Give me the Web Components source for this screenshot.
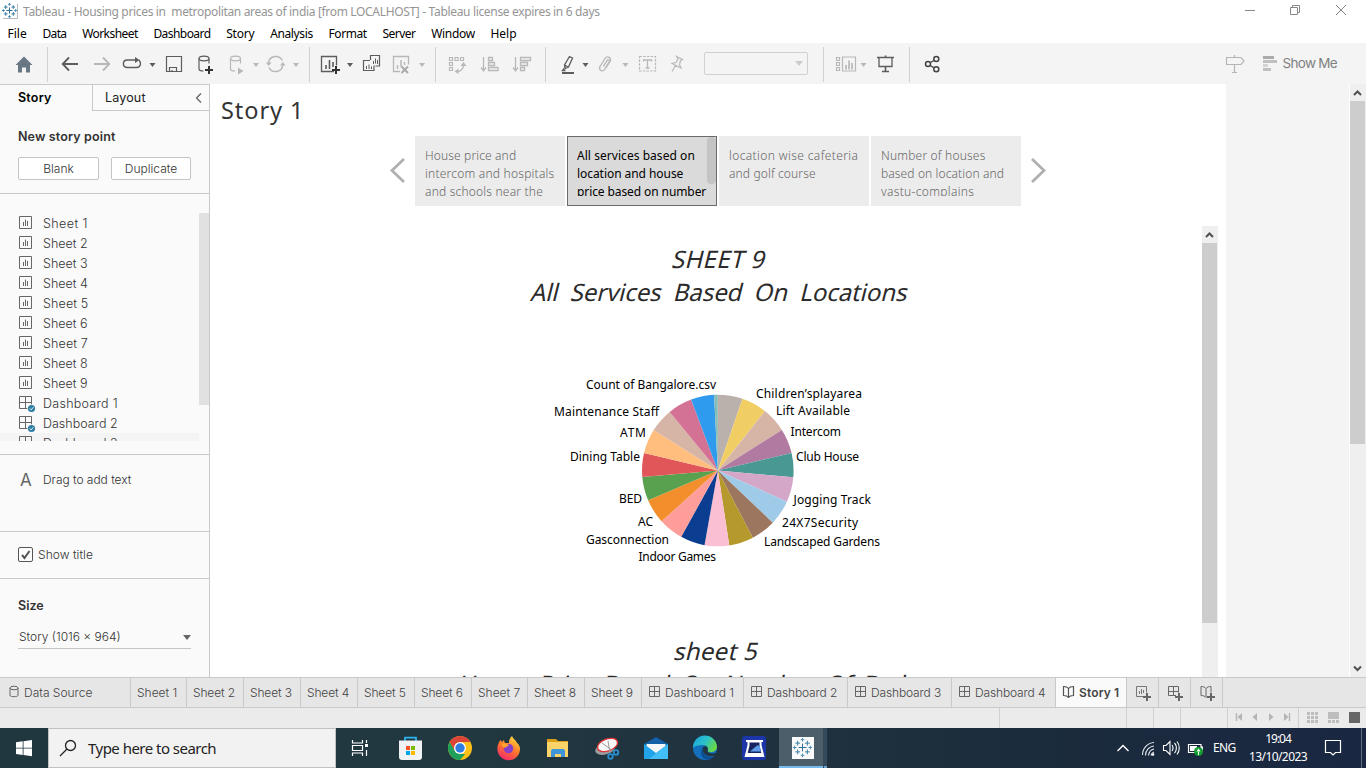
<!DOCTYPE html>
<html lang="en">
<head>
<meta charset="utf-8">
<title>Tableau - Housing prices</title>
<style>
html,body{margin:0;padding:0;width:1366px;height:768px;overflow:hidden;background:#fff}
body{font-family:"Noto Sans","Open Sans",sans-serif;font-size:12px;display:flex;flex-direction:column}
</style>
</head>
<body>
<title-bar></title-bar>
<menu-bar></menu-bar>
<tool-bar></tool-bar>
<work-area></work-area>
<sheet-tabs></sheet-tabs>
<status-bar></status-bar>
<task-bar></task-bar>
<script>
const define = (name, html) => customElements.define(name, class extends HTMLElement {
  connectedCallback() {
    if (this.shadowRoot) return;
    this.attachShadow({mode: 'open'}).innerHTML = typeof html === 'function' ? html(this) : html;
  }
});

/* Text run whose letter spacing is tuned so that it takes w pixels. */
customElements.define('fit-text', class extends HTMLElement {
  connectedCallback() {
    if (this.shadowRoot) return;
    const r = this.attachShadow({mode: 'open'});
    r.innerHTML = '<style>:host{display:inline-block;white-space:pre}span{display:inline-block}:host(.ob) span{transform:skewX(-14deg)}</style><span><slot></slot></span>';
    const s = r.querySelector('span'), w = +this.getAttribute('w'), n = this.textContent.length;
    if (w && n) s.style.letterSpacing = ((w - s.offsetWidth) / n).toFixed(3) + 'px';
  }
});

const caret = (x, c, y = 63) => `<path d="M${x} ${y}h6l-3 4z" fill="${c}"/>`;
const sep = x => `<path d="M${x}.5 47v35" stroke="#d0d0d0"/>`;
const D = '#5c5c5c', G = '#b8b8b8';
const plus = (x, y, c = '#444') => `<path d="M${x - 4} ${y}h8M${x} ${y - 4}v8" stroke="${c}" stroke-width="2"/>`;
const cyl = (x, y, c) => `<g fill="none" stroke="${c}" stroke-width="1.2"><ellipse cx="${x}" cy="${y}" rx="5" ry="2.3"/><path d="M${x - 5} ${y}v10.500c0 1.500 2 2 4.500 2M${x + 5} ${y}v5"/></g>`;
const star = (x, y, s, c) => `<path d="M${x - s} ${y}h${2 * s}M${x} ${y - s}v${2 * s}" stroke="${c}"/>`;
const logo = (x, y, k) => star(x, y, 3.4 * k, '#2f6f9a') +
  [[-4.2,-3.8],[4.2,-3.8],[-4.2,3.8],[4.2,3.8]].map(p => star(x + p[0] * k, y + p[1] * k, 2.1 * k, '#3b7ea4')).join('') +
  [[0,-6.8],[0,6.8],[-6.8,0],[6.8,0]].map(p => star(x + p[0] * k, y + p[1] * k, 1.6 * k, '#4f8fb8')).join('');

/* name: [x, y, width, height, drawing] */
const icons = {
  logo: [2,3,17,17, `<path d="M3 18.500h14.500V4" fill="none" stroke="#b9b9b9"/>` + logo(9.5,10.5,.9)],
  winMin: [1227,0,46,24, `<path d="M1245 10.500h10" stroke="#888"/>`],
  winMax: [1273,0,46,24, `<path d="M1290.500 7.500h7v7h-7zM1292.500 7.500v-2h7v7h-2" fill="none" stroke="#888"/>`],
  winClose: [1319,0,47,24, `<path d="M1336 5l10 10M1346 5l-10 10" stroke="#888"/>`],
  home: [0,43,48,41, `<path d="M24 56.500l8.500 8.500h-2.500v7.500h-4v-5h-4v5h-4V65h-2.500z" fill="#697684"/>` + sep(47)],
  back: [48,43,37,41, `<path d="M78 64H63M69 57.500L62.700 64l6.300 6.500" fill="none" stroke="${D}" stroke-width="1.8"/>`],
  fwd: [85,43,31,41, `<path d="M94 64h15M103 57.500l6.300 6.500-6.300 6.500" fill="none" stroke="${G}" stroke-width="1.8"/>`],
  redo: [116,43,42,41, `<path d="M136 60h-8.500c-5.500 0-5.500 7.500 0 7.500h9c4.500 0 5-5 2.500-7.500" fill="none" stroke="${D}" stroke-width="1.400"/><path d="M135 57l4.500 3-4.500 3z" fill="${D}"/>` + caret(149.5,D)],
  save: [158,43,32,41, `<path d="M166.500 56.500h15v15h-15zM169.500 71v-3.500h7v3.500M172 70v1.500" fill="none" stroke="${D}" stroke-width="1.200"/>`],
  newData: [190,43,34,41, cyl(204,58.5,D) + plus(209,70,'#333')],
  pauseData: [224,43,38,41, cyl(235.5,58.5,G) + `<path d="M238 67.500l5.500 3.500-5.500 3.500z" fill="${G}"/>` + caret(253,G)],
  refresh: [262,43,48,41, `<path d="M268.500 63a7.300 7.300 0 0 1 13.800-2.500M282.800 65a7.300 7.300 0 0 1-13.800 2.500" fill="none" stroke="${G}" stroke-width="1.500"/><path d="M266 62.500h5.500l-3 3.500zM280 65.500h5.500l-2.700-3.500z" fill="${G}"/>` + caret(293,G) + sep(309)],
  newSheet: [310,43,47,41, `<path d="M334 71.500h-12.500v-15h15v9" fill="none" stroke="${D}" stroke-width="1.300"/><path d="M326 65v4M329.500 60v9M333 62v5" stroke="${D}" stroke-width="1.600"/>` + plus(336,70,'#333') + caret(347,D)],
  dupSheet: [357,43,30,41, `<path d="M370.500 60v-4.500h9v10.500h-4M370 60.500h-6.500v10h10.500v-5" fill="none" stroke="${D}" stroke-width="1.200"/><path d="M373.500 61v3M375.500 58.500v5M377.500 60v4M366.500 66v3M369 64.500v4.500M371.500 66.500v2.500" stroke="${D}"/>`],
  clearSheet: [387,43,49,41, `<path d="M400 71.500h-6.500v-15h15v8" fill="none" stroke="${G}" stroke-width="1.300"/><path d="M397.500 65v4M401 60v7M404.500 62v3" stroke="${G}" stroke-width="1.500"/><path d="M401.500 66.500l6.500 6.500m0-6.500l-6.500 6.500" stroke="#aaa" stroke-width="2"/>` + caret(419,G) + sep(435)],
  swap: [436,43,37,41, `<g fill="none" stroke="${G}" stroke-width="1.200"><path d="M449.500 57.500h3v3h-3zM455 57.500h3v3h-3zM460.500 57.500h3v3h-3zM449.500 62.500h3v3h-3zM449.500 67.500h3v3h-3zM463.500 65c0 4-3 6.500-6 6.500"/></g><path d="M460.500 66l3-4 3 4zM458.500 68.500l-4 3 4 2.500z" fill="${G}"/>`],
  sortAsc: [473,43,32,41, `<path d="M483.500 57v13M481 67.500l2.500 3.500 2.500-3.500M488.500 57.500h4v3h-4zM488.500 62.500h6v3h-6zM488.500 67.500h9.500v3h-9.500z" fill="none" stroke="${G}" stroke-width="1.300"/>`],
  sortDesc: [505,43,41,41, `<path d="M515.500 57v13M513 67.500l2.500 3.500 2.500-3.500M520.500 57.500h10v3h-10zM520.500 62.500h7v3h-7zM520.500 67.500h4v3h-4z" fill="none" stroke="${G}" stroke-width="1.300"/>` + sep(545)],
  pen: [546,43,47,41, `<path d="M569.500 56.500l3 1.500-4 9-3.500 1.500-.5-3.500zM564.500 65l3.500 2M564 68.500l-1.500 2h3" fill="none" stroke="${D}" stroke-width="1.300"/><path d="M562 73h12" stroke="${D}" stroke-width="2"/>` + caret(582.5,D)],
  clip: [593,43,40,41, `<path d="M603.500 66.500l4-6.500M606 68l4-6.500c2-3.500-2.500-6.500-5-3l-5 8c-1.800 3.500 2.500 6 4.500 3l4.500-7.500c1-2-1-3-2-1.500l-3.500 5.500" fill="none" stroke="${G}" stroke-width="1.300"/>` + caret(622.5,G)],
  label: [633,43,31,41, `<path d="M639.500 56.500h16v14.500h-16z" fill="none" stroke="${G}" stroke-width="1.200" stroke-dasharray="2.500 1.200"/><path d="M643.500 61.500v-1.500h8v1.500M647.500 60v8M645.500 68h4" fill="none" stroke="${G}" stroke-width="1.300"/>`],
  pin: [664,43,32,41, `<path d="M676.500 56.500l6 3-2 1-1 4 1.500 3.500-9-4.500 4-1 2-3.500zM675.500 65.500l-3.500 6" fill="none" stroke="${G}" stroke-width="1.200"/>`],
  cards: [816,43,54,41, sep(823) + `<path d="M836.500 57.500h3v3h-3zM836.500 62.500h3v3h-3zM836.500 67.500h3v3h-3zM842.500 57h13v14h-13z" fill="none" stroke="${G}" stroke-width="1.200"/><path d="M846 65v4.500M849 60.500v9M852 63v6.500" stroke="${G}" stroke-width="1.700"/>` + caret(860.5,G)],
  present: [870,43,40,41, `<path d="M877 57.500h17M885.500 55.500v2M885.500 67v5M882 71.500h7" stroke="${D}" stroke-width="1.600"/><path d="M879 58v8.500h13V58" fill="none" stroke="${D}" stroke-width="1.300"/>` + sep(909)],
  share: [910,43,40,41, `<path d="M936.500 59l-8.500 5 8.500 5.500" fill="none" stroke="#444" stroke-width="1.400"/><g fill="#f4f4f4" stroke="#444" stroke-width="1.500"><circle cx="928" cy="64" r="2.500"/><circle cx="936.300" cy="59" r="2.500"/><circle cx="936.300" cy="69.300" r="2.500"/></g>`],
  guide: [1216,43,38,41, `<path d="M1226.500 57.500h14.500l3 3.500-3 3.500h-14.500zM1234.500 55v2.500M1234.500 65v7.500M1232 72.500h5" fill="none" stroke="#b5b5b5" stroke-width="1.200"/>`],
  showMe: [1254,43,29,41, `<path d="M1263 56h11v3h-11z" fill="#aaa"/><path d="M1263 60h14v3h-14zM1263 68h8v3h-8z" fill="#c0c0c0"/><path d="M1263 64h5v3h-5z" fill="#d4d4d4"/>`],
  sheet: [18,215,16,16, `<path d="M19.500 216.500h12v12h-12z" fill="none" stroke="#666"/><path d="M23.500 222v4M25.500 219.500v6.500M27.500 221v5" stroke="#666"/>`],
  dash: [18,395,18,18, `<path d="M19.500 396.500h12v12h-12zM19.500 402.500h12M25.500 396.500v12" fill="none" stroke="#666"/><circle cx="31.500" cy="408.500" r="4.200" fill="#fafafa"/><circle cx="31.500" cy="408.500" r="3.600" fill="#2e7da3"/><path d="M29.800 408.500l1.300 1.300 2.200-2.500" fill="none" stroke="#fff"/>`],
  check: [18,547,15,15, `<rect x="18.500" y="547.500" width="14" height="14" rx="1.500" fill="#fdfdfd" stroke="#555"/><path d="M22 555l2.500 3 5-7" fill="none" stroke="#555" stroke-width="2"/>`],
  collapse: [194,91,9,12, `<path d="M201 92.500l-4.500 4.500 4.500 4.500" fill="none" stroke="#666" stroke-width="1.300"/>`],
  left: [388,156,20,28, `<path d="M404 159l-12 11.500 12 11.500" fill="none" stroke="#b0b0b0" stroke-width="2.800"/>`],
  right: [1029,156,20,28, `<path d="M1032 159l12 11.500-12 11.500" fill="none" stroke="#b0b0b0" stroke-width="2.800"/>`],
  data: [8,685,12,14, `<g fill="none" stroke="#666"><ellipse cx="14" cy="688" rx="4" ry="1.800"/><path d="M10 688v7.500c0 1.500 8 1.500 8 0V688"/></g>`],
  tabDash: [648,685,13,13, `<path d="M649.500 686.500h10v10h-10zM649.500 691.500h10M654.500 686.500v10" fill="none" stroke="#666"/>`],
  tabStory: [1062,685,13,13, `<path d="M1068.500 688.500c-1-1.500-3-2-5-2v9c2 0 4 .5 5 2 1-1.500 3-2 5-2v-9c-2 0-4 .5-5 2zv9" fill="none" stroke="#555" stroke-width="1.200"/>`],
  addSheet: [1127,678,31,29, `<path d="M1144 696.500h-7.500v-10h10v6" fill="none" stroke="#777"/><path d="M1139.500 691v3M1141.500 689v5M1143.500 690v3" stroke="#777"/>` + plus(1147,697,'#666')],
  addDash: [1159,678,31,29, `<path d="M1176 695.500h-7.500v-9h10v6M1168.500 691.500h10M1173.500 686.500v9" fill="none" stroke="#666"/>` + plus(1179,697,'#666')],
  addStory: [1191,678,31,29, `<path d="M1206 697.500c-1-1.500-3-2-5-2v-9c2 0 4 .5 5 2 1-1.500 3-2 5-2v6M1206 688.500v9" fill="none" stroke="#666"/>` + plus(1211,697,'#666')],
  pager: [1228,708,70,20, `<path d="M1242 713v8l-4.500-4zM1257 713v8l-4.500-4zM1269 713v8l4.500-4zM1284 713v8l4.500-4z" fill="#b5b5b5"/><path d="M1236.500 713v8M1289.500 713v8" stroke="#b5b5b5" stroke-width="1.400"/>`],
  views: [1299,708,67,20, `<path d="M1307 712h3v3h-3zM1311 712h3v3h-3zM1315 712h3v3h-3zM1307 716h3v3h-3zM1311 716h3v3h-3zM1315 716h3v3h-3zM1307 720h3v3h-3zM1311 720h3v3h-3zM1315 720h3v3h-3zM1328 712h11v7h-11zM1328 720h3v3h-3zM1332 720h3v3h-3zM1336 720h3v3h-3z" fill="#bdbdbd"/><path d="M1349 712h11v11h-11z" fill="#666"/>`],
  start: [0,728,48,40, `<path d="M16 742.300l6.700-1v6.400H16zM23.500 741.200l8.500-1.200v7.700h-8.500zM16 748.500h6.700v6.400l-6.700-1zM23.500 748.500h8.500v7.700l-8.500-1.200z" fill="#fff"/>`],
  search: [56,732,32,32, `<g fill="none" stroke="#222" stroke-width="1.300"><circle cx="70.500" cy="745.500" r="5"/><path d="M67 749l-7 7"/></g>`],
  taskView: [336,728,50,40, `<path d="M352.500 740v3h10v-3M352.500 756v-3h10v3M352.500 745.500h10v5h-10zM366.500 740v3M366.500 750v6" fill="none" stroke="#fff" stroke-width="1.200"/><path d="M365 744h3v3h-3z" fill="#fff"/>`],
  store: [386,728,49,40, `<path d="M405 741v-3.300h11v3.300" fill="none" stroke="#2cb4ee" stroke-width="1.800"/><path d="M399 740.500h23V757q0 3-3 3h-17q-3 0-3-3z" fill="#f0f2f3"/><path d="M406 746h4v4h-4z" fill="#f25022"/><path d="M411 746h4v4h-4z" fill="#7fba00"/><path d="M406 751h4v4h-4z" fill="#00a4ef"/><path d="M411 751h4v4h-4z" fill="#ffb900"/>`],
  chrome: [435,728,49,40, `<circle cx="460" cy="748" r="12" fill="#fbc116"/><path d="M449.600 742a12 12 0 0 1 20.800 0H460l-5.200 9z" fill="#db4437"/><path d="M449.600 742l5.200 9 5.200 3h5.200L460 760A12 12 0 0 1 449.600 742z" fill="#1fa05a"/><circle cx="460" cy="748" r="6" fill="#fff"/><circle cx="460" cy="748" r="4.700" fill="#2f7de1"/>`],
  firefox: [484,728,49,40, `<defs><linearGradient id="ff" x1=".8" y1="0" x2=".3" y2="1"><stop offset="0" stop-color="#ffe345"/><stop offset=".5" stop-color="#ff7a29"/><stop offset="1" stop-color="#f5296b"/></linearGradient></defs><path d="M512 736c1 3 4 4 5 7 2 1 3 4 3 6a11.300 11.300 0 0 1-22.600 0c0-4 1-6 3-9l1.500 2 2-2 1 3h4c0-3 1-5 3.100-7z" fill="url(#ff)"/><circle cx="508.500" cy="748.500" r="4.800" fill="#8a3fc8"/><path d="M501 744c3-1.500 5 0 8 1-2 2-4 2-5 3z" fill="#ffa52c"/>`],
  folder: [533,728,49,40, `<path d="M547 739h9l2 2h10v4h-21z" fill="#dba01b"/><path d="M547 742h21v15h-21z" fill="#fbd469"/><path d="M551 757v-6q0-2 2-2h10q2 0 2 2v6h-4v-3h-6v3z" fill="#3e95da"/>`],
  snip: [582,728,49,40, `<ellipse cx="605" cy="749" rx="10" ry="5.500" fill="#9a9fa3" transform="rotate(-14 605 749)"/><ellipse cx="607.500" cy="745" rx="10.500" ry="6" fill="#f7f7f7" stroke="#d33" stroke-width="1.300" transform="rotate(-20 607.500 745)"/><path d="M602 743l11 8M608 741l2 12" stroke="#999"/><g fill="none" stroke="#2b8fcf" stroke-width="1.800"><circle cx="616" cy="752.500" r="2.300"/><circle cx="610.500" cy="756.500" r="2.300"/></g>`],
  mail: [631,728,49,40, `<path d="M644 744l12-7 12 7v7h-24z" fill="#1261a8"/><path d="M646.500 744h19v9h-19z" fill="#f4f6f8"/><path d="M644 744l12 9 12-9v15h-24z" fill="#22a5e8"/><path d="M668 744l-19 15h19z" fill="#43bdf5"/>`],
  edge: [680,728,49,40, `<defs><linearGradient id="eg" x1="0" y1="0" x2="1" y2=".5"><stop offset="0" stop-color="#1ba3e0"/><stop offset=".55" stop-color="#29c1c9"/><stop offset="1" stop-color="#67d84a"/></linearGradient></defs><circle cx="705" cy="748" r="12" fill="#1470bd"/><path d="M693 748a12 12 0 0 1 24-1c0 5-7 6.500-9.500 4 2-3-1-6-4-6-5 0-9 1-10.500 3z" fill="url(#eg)"/><path d="M703 747c-2 7 5 11 12.500 8.500l1-2.500c-5 1-8 .5-9-2 1-2 0-4-1.500-5z" fill="#213541"/><path d="M703 747c-2 7 4 11 11 9.500l-3 2.500c-8 3-13-6-8-12z" fill="#0d4e93"/>`],
  scan: [729,728,50,40, `<rect x="742" y="736" width="24" height="24" rx="3" fill="#1c35a8"/><path d="M746 740h17v2h-1.500v3l3 12h-20l3-12v-3H746z" fill="#fff"/><path d="M749.500 742.500h10v3l1.800 7.500h-13.600l1.800-7.500z" fill="#16245f"/><path d="M750 751.500l7-6h2.500l1.500 6z" fill="#5a9bea"/>`],
  tableau: [779,728,44,40, `<path d="M779 728h44v40h-44z" fill="#4b5e69"/><path d="M792 737h22v22h-22z" fill="#fafafa"/>` + logo(802.5,747.5,1.150) + `<path d="M779 766h44v2h-44z" fill="#76b9ed"/>`],
  stack: [823,728,4,40, `<path d="M823 728h4v40h-4z" fill="#34495a"/><path d="M824 766h3v2h-3z" fill="#68a5d6"/>`],
  trayUp: [1106,728,30,40, `<path d="M1117.500 751l5.500-5.500 5.500 5.500" fill="none" stroke="#fff" stroke-width="1.400"/>`],
  wifi: [1136,728,24,40, `<g fill="none" stroke="#e8ecf0" stroke-width="1.100"><path d="M1142.500 755c0-7 5-12 11.500-12.500M1145.500 755.500c0-5.500 4-9 8.500-9.500M1148.500 755.500c.5-3.500 2.500-6 5.500-6.500M1151 755.500c.5-2 1.500-3 3-3.500"/></g><circle cx="1153" cy="754.500" r="1.300" fill="#fff"/>`],
  volume: [1160,728,24,40, `<path d="M1163.500 745.500h2.500l4-4v13l-4-4h-2.500zM1172 745c1.300 1.500 1.300 4.500 0 6M1174.500 743c2.500 2.500 2.500 7.500 0 10M1177 741.500c3 3.500 3 9.500 0 13" fill="none" stroke="#fff" stroke-width="1.100"/>`],
  battery: [1184,728,29,40, `<path d="M1188.500 744.500h12.500v8h-12.500z" fill="none" stroke="#fff" stroke-width="1.200"/><path d="M1190 746h7v5h-7zM1201 746.500h2v4h-2z" fill="#fff"/><circle cx="1198.500" cy="751.500" r="4.500" fill="#159a2f"/><path d="M1198.500 748.500l-2 3h4zM1198 751h1v4h-1z" fill="#fff"/>`],
  notify: [1315,728,51,40, `<path d="M1325.500 740.500h15v12h-5l-2.500 2.500-2.500-2.500h-5z" fill="none" stroke="#fff" stroke-width="1.200"/><path d="M1361.500 728v40" stroke="#65707e"/>`],
  up: [0,0,15,17, `<path d="M4 11l3.500-3.500L11 11" fill="none" stroke="#505050" stroke-width="2"/>`],
  down: [0,0,15,17, `<path d="M4 6.500l3.500 3.500L11 6.500" fill="none" stroke="#505050" stroke-width="2"/>`]
};
define('ui-icon', el => {
  const [x, y, w, h, art] = icons[el.getAttribute('name')];
  return `<style>:host{display:block;flex:none;width:${w}px;height:${h}px}svg{display:block}</style><svg width="${w}" height="${h}" viewBox="${x} ${y} ${w} ${h}">${art}</svg>`;
});
const ic = n => `<ui-icon name="${n}"></ui-icon>`;
const t = (w, s, c = '') => `<fit-text w="${w}" class="${c}">${s}</fit-text>`;

define('title-bar', `<style>
:host{display:flex;height:24px;background:#fff;color:#959595;font-size:12px;line-height:24px}
.logo{padding:3px 4px 0 2px}.sp{flex:1}</style>
<div class="logo">${ic('logo')}</div>${t(577, 'Tableau - Housing prices in  metropolitan areas of india [from LOCALHOST] - Tableau license expires in 6 days')}
<div class="sp"></div>${['winMin','winMax','winClose'].map(ic).join('')}`);

define('menu-bar', `<style>:host{display:flex;height:19px;line-height:20px;color:#000;padding-left:7.500px;gap:15.700px;background:#fff}</style>` +
  [[19,'File'],[24.5,'Data'],[56,'Worksheet'],[57,'Dashboard'],[28,'Story'],[43,'Analysis'],[38.5,'Format'],[33,'Server'],[44,'Window'],[26,'Help']].map(m => t(...m)).join(''));

define('combo-box', `<style>:host{display:flex;box-sizing:border-box;width:104px;height:23px;border:1px solid #d0d0d0;border-radius:2px;margin:9px 8px 0 8px;justify-content:flex-end;align-items:center;padding-right:4px;flex:none}
i{border:4px solid transparent;border-top:5px solid #ccc;border-bottom:0}</style><i></i>`);

define('tool-bar', `<style>:host{display:flex;height:41px;background:#f4f4f4;color:#808080;font:400 13.500px Inter,sans-serif}
.sp{flex:1}fit-text{line-height:41px;margin-right:29px}</style>` +
  ['home','back','fwd','redo','save','newData','pauseData','refresh','newSheet','dupSheet','clearSheet','swap','sortAsc','sortDesc','pen','clip','label','pin'].map(ic).join('') +
  `<combo-box></combo-box>` + ['cards','present','share'].map(ic).join('') + `<div class="sp"></div>` + ic('guide') + ic('showMe') + t(54,'Show Me'));

define('sheet-row', el => {
  const s = el.getAttribute('label'), d = s[0] === 'D';
  return `<style>:host{display:flex;height:20px;line-height:22px;flex:none;padding-left:18px;box-sizing:border-box}
  ui-icon{margin-top:2px;margin-right:${d ? 7 : 9}px}</style>${ic(d ? 'dash' : 'sheet')}${t(d ? 75 : 45, s)}`;
});

define('side-pane', `<style>
:host{display:flex;flex-direction:column;box-sizing:border-box;width:210px;height:593px;background:#fafafa;border-right:1px solid #c9c9c9;border-top:1px solid #c9c9c9;color:#444;font:400 12.500px Inter,sans-serif;flex:none}
.tabs{display:flex;height:26px;line-height:25px;color:#222}
.a{width:74px;padding-left:18px;font-weight:600;color:#000}
.b{flex:1;display:flex;border-left:1px solid #c9c9c9;border-bottom:1px solid #c9c9c9;padding:0 6px 0 12px;justify-content:space-between;align-items:center;box-sizing:border-box}
h4{margin:0;font-size:12.500px;font-weight:600;color:#333;padding-left:18px;line-height:22px;height:20px}
.new{box-sizing:border-box;height:83px;padding-top:15px;border-bottom:1px solid #c9c9c9}
.btns{display:flex;gap:12px;padding:11px 18px 0}
.btn{flex:1;height:21px;line-height:21px;text-align:center;border:1px solid #c5c5c5;background:#fff;border-radius:2px;font-size:12px}
.list{height:247px;display:flex;padding-top:19px;box-sizing:border-box}
.rows{flex:1;overflow:hidden;display:flex;flex-direction:column;font-weight:300;color:#333}
.bar{width:10px;height:192px;background:#e1e1e1}
.gap{height:13px;border-bottom:1px solid #c9c9c9}
.drag{height:76px;border-bottom:1px solid #c9c9c9;display:flex;line-height:50px;padding-left:20px;font-size:12px}
.drag b{font:400 17px/50px Inter,sans-serif;color:#666;width:23px}
.show{height:46px;border-bottom:1px solid #c9c9c9;display:flex;align-items:flex-start;gap:5px;padding-left:18px;font-size:12px;line-height:20px}
.show ui-icon{margin-top:15px}.show fit-text{margin-top:13px}
.size{padding-top:16px}
.sel{margin:11px 18px 0;height:22px;line-height:22px;border-bottom:1px solid #c5c5c5;display:flex;justify-content:space-between;align-items:center;font-size:12px;padding-left:1px}
.sel i{border:4px solid transparent;border-top:5px solid #666;border-bottom:0}
.l{font-weight:300;color:#333}
.last{background:#f4f4f4;flex:none}
</style>
<div class="tabs"><div class="a">${t(34,'Story')}</div><div class="b">${t(41,'Layout')}${ic('collapse')}</div></div>
<div class="new"><h4>${t(98,'New story point')}</h4><div class="btns"><div class="btn">${t(31,'Blank','l')}</div><div class="btn" style="flex:0 0 78px">${t(52,'Duplicate','l')}</div></div></div>
<div class="list"><div class="rows">${[1,2,3,4,5,6,7,8,9].map(n => `<sheet-row label="Sheet ${n}"></sheet-row>`).join('')}<sheet-row label="Dashboard 1"></sheet-row><sheet-row label="Dashboard 2"></sheet-row><sheet-row class="last" label="Dashboard 3"></sheet-row></div><div class="bar"></div></div>
<div class="gap"></div>
<div class="drag"><b>A</b>${t(88.500,'Drag to add text','l')}</div>
<div class="show">${ic('check')}${t(54.500,'Show title','l')}</div>
<div class="size"><h4>${t(26,'Size')}</h4><div class="sel">${t(102,'Story (1016 x 964)','l')}<i></i></div></div>`);

define('story-point', el => `<style>
:host{display:block;box-sizing:border-box;width:150px;height:70px;background:#ececec;color:#666;padding:10px 0 10px 10px;position:relative}
:host([active]){background:#dadada;color:#000;border:1px solid #6a6a6a;padding:9px 0 9px 9px}
div{height:50px;overflow:hidden;line-height:20px;font-size:12px;font-weight:300}
:host([active]) div{font-weight:380}
fit-text{display:block;height:18px}
i{display:none}:host([active]) i{display:block;position:absolute;right:0;top:0;width:9px;height:47px;border-radius:4px;background:#c4c4c4}
</style><div>${el.getAttribute('lines').split('|').map(l => { const [w, s] = l.split(':'); return t(w, s); }).join('')}</div><i></i>`);

define('pie-chart', () => {
  const cols = ['#bab0ac','#f1ce63','#d7b5a6','#b07aa1','#499894','#d4a6c8','#a0cbe8','#9d7660','#b6992d','#fabfd2','#0b3e91','#ff9d9a','#f28e2b','#59a14f','#e15759','#ffbe7d','#d7b5a6','#d37295','#2e9bef','#86bcb6'];
  const ends = [0,19,38.4,57.7,76.7,95.2,114.3,133.5,152.5,171.3,190.1,208.9,227.9,246.8,265,283.4,302.2,320.6,339.4,357.2,360];
  const cx = 717.8, cy = 470.5, r = 75.8;
  const pt = a => { a *= Math.PI / 180; return `${(cx + r * Math.sin(a)).toFixed(2)} ${(cy - r * Math.cos(a)).toFixed(2)}`; };
  const slices = cols.map((c, i) => `<path d="M${cx} ${cy}L${pt(ends[i])}A${r} ${r} 0 0 1 ${pt(ends[i + 1])}z" fill="${c}"/>`).join('');
  const labels = [[586,716,385,'Count of Bangalore.csv'],[756,862,394,'Children’splayarea'],[776,850,411,'Lift Available'],[790.5,841,432,'Intercom'],[796,859,457,'Club House'],[793.5,871,500,'Jogging Track'],[782,858,523,'24X7Security'],[764,880,542,'Landscaped Gardens'],[638.5,716,557,'Indoor Games'],[586,669,540,'Gasconnection'],[638,653,522,'AC'],[619,642,499,'BED'],[570,640,457,'Dining Table'],[620,646,433,'ATM'],[554,659,412,'Maintenance Staff']]
    .map(([a, b, y, s]) => `<text x="${a}" y="${y + 4}" textLength="${b - a}">${s}</text>`).join('');
  return `<style>:host{display:block}svg{display:block}text{font:370 12px "Noto Sans",sans-serif;fill:#000}</style>
  <svg width="760" height="210" viewBox="340 370 760 210">${slices}${labels}</svg>`;
});

define('scroll-bar', el => {
  const th = el.getAttribute('thumb');
  return `<style>:host{display:flex;flex-direction:column;width:16px;background:#efefef;flex:none}
  i{display:block;height:${th}px;width:15px;background:#cdcdcd}.sp{flex:1}</style>${ic('up')}<i></i><div class="sp"></div>${el.hasAttribute('down') ? ic('down') : ''}`;
});

define('story-view', `<style>
:host{display:flex;flex-direction:column;width:1016px;height:593px;overflow:hidden;background:#fff;flex:none}
.title{height:52px;padding-left:11px;font-size:23.500px;line-height:52px;color:#333;font-weight:380;box-sizing:border-box}
.nav{display:flex;height:70px;padding-left:178px;align-items:center}
.nav>ui-icon{margin-top:-2px}
.pts{display:flex;gap:2px;margin:0 8px 0 7px}
.body{display:flex;margin-top:20px;height:451px;overflow:hidden}
.dash{width:992px;display:flex;flex-direction:column;align-items:center}
.h{font-size:24px;line-height:33px;height:33px;color:#2b2b2b;padding-left:28px;flex:none}
.h.f{margin-top:16px}
pie-chart{margin-top:62px;align-self:flex-start;margin-left:130px}
.h.g{margin-top:54px}
.h.g,.h.k{padding-left:22px}
</style>
<div class="title">${t(83.5,'Story 1')}</div>
<div class="nav">${ic('left')}<div class="pts">
<story-point lines="91:House price and|129:intercom and hospitals|118:and schools near the"></story-point>
<story-point active lines="118:All services based on|106:location and house|129:price based on number"></story-point>
<story-point lines="129:location wise cafeteria|87:and golf course"></story-point>
<story-point lines="104:Number of houses|123.5:based on location and|93:vastu-complains"></story-point>
</div>${ic('right')}</div>
<div class="body"><div class="dash">
<div class="h f">${t(93.5,'SHEET 9','ob')}</div><div class="h">${t(376,'All  Services  Based  On  Locations','ob')}</div>
<pie-chart></pie-chart>
<div class="h g">${t(84,'sheet 5','ob')}</div><div class="h k">${t(516,'House  Price  Based  On  Number  Of  Bedrooms','ob')}</div>
</div><scroll-bar thumb="380"></scroll-bar></div>`);

define('work-area', `<style>:host{display:flex;height:593px;background:#f4f4f4}.sp{flex:1;border-right:1px solid #fff}scroll-bar{height:593px}</style>
<side-pane></side-pane><story-view></story-view><div class="sp"></div><scroll-bar thumb="343" down></scroll-bar>`);

const tab = (w, tw, s, icon, c = '') => `<div class="t ${c}" style="width:${w}px">${icon ? ic(icon) : ''}${t(tw, s)}</div>`;
define('sheet-tabs', `<style>
:host{display:flex;box-sizing:border-box;height:31px;border-top:1px solid #c9c9c9;border-bottom:1px solid #c9c9c9;background:#e6e6e6;color:#444;font:300 12px/29px Inter,sans-serif}
.t{box-sizing:border-box;border-right:1px solid #c9c9c9;display:flex;padding-left:6px;gap:4px;flex:none}
.t ui-icon{margin-top:7px}.d{padding-left:8px}.act{background:#fafafa;font-weight:600;color:#444}.n{border-right:1px solid #c9c9c9}
</style>` + tab(131,68,'Data Source','data','d') + [56,57,57,57,57,57,56,57,57].map((w, i) => tab(w,i ? 42 : 40,'Sheet ' + (i + 1))).join('') +
  [102,104,104,104].map((w, i) => tab(w,i ? 70.500 : 69,'Dashboard ' + (i + 1),'tabDash')).join('') + tab(71,40,'Story 1','tabStory','act') +
  ['addSheet','addDash','addStory'].map(n => `<div class="n">${ic(n)}</div>`).join(''));

define('status-bar', `<style>:host{display:flex;height:20px;background:#ebebeb}div{box-sizing:border-box;border-right:1px solid #d0d0d0;flex:none;height:20px}</style>` +
  [1000,127,27,27,47].map(w => `<div style="width:${w}px"></div>`).join('') + `<div>${ic('pager')}</div>${ic('views')}`);

define('task-bar', `<style>
:host{display:flex;height:40px;background:linear-gradient(90deg,#20373f,#213840 35%,#1f303f 60%,#1b2c3c 75%,#1a2742);color:#fff;font-size:12px}
.s{box-sizing:border-box;width:288px;height:40px;background:#f2f2f2;border:1px solid #c2c2c2;display:flex;color:#222;font-size:15px;padding:3px 0 0 7px}
.s fit-text{line-height:32px}
.sp{flex:1}.lang{width:28px;line-height:40px}.clk{width:74px;text-align:center;line-height:18px;padding-top:2px}
</style>${ic('start')}<div class="s">${ic('search')}${t(128,'Type here to search')}</div>` +
  ['taskView','store','chrome','firefox','folder','snip','mail','edge','scan','tableau','stack'].map(ic).join('') + '<div class="sp"></div>' +
  ['trayUp','wifi','volume','battery'].map(ic).join('') + `<div class="lang">${t(23,'ENG')}</div><div class="clk">${t(26,'19:04')}<br>${t(58,'13/10/2023')}</div>${ic('notify')}`);
</script>
</body>
</html>
